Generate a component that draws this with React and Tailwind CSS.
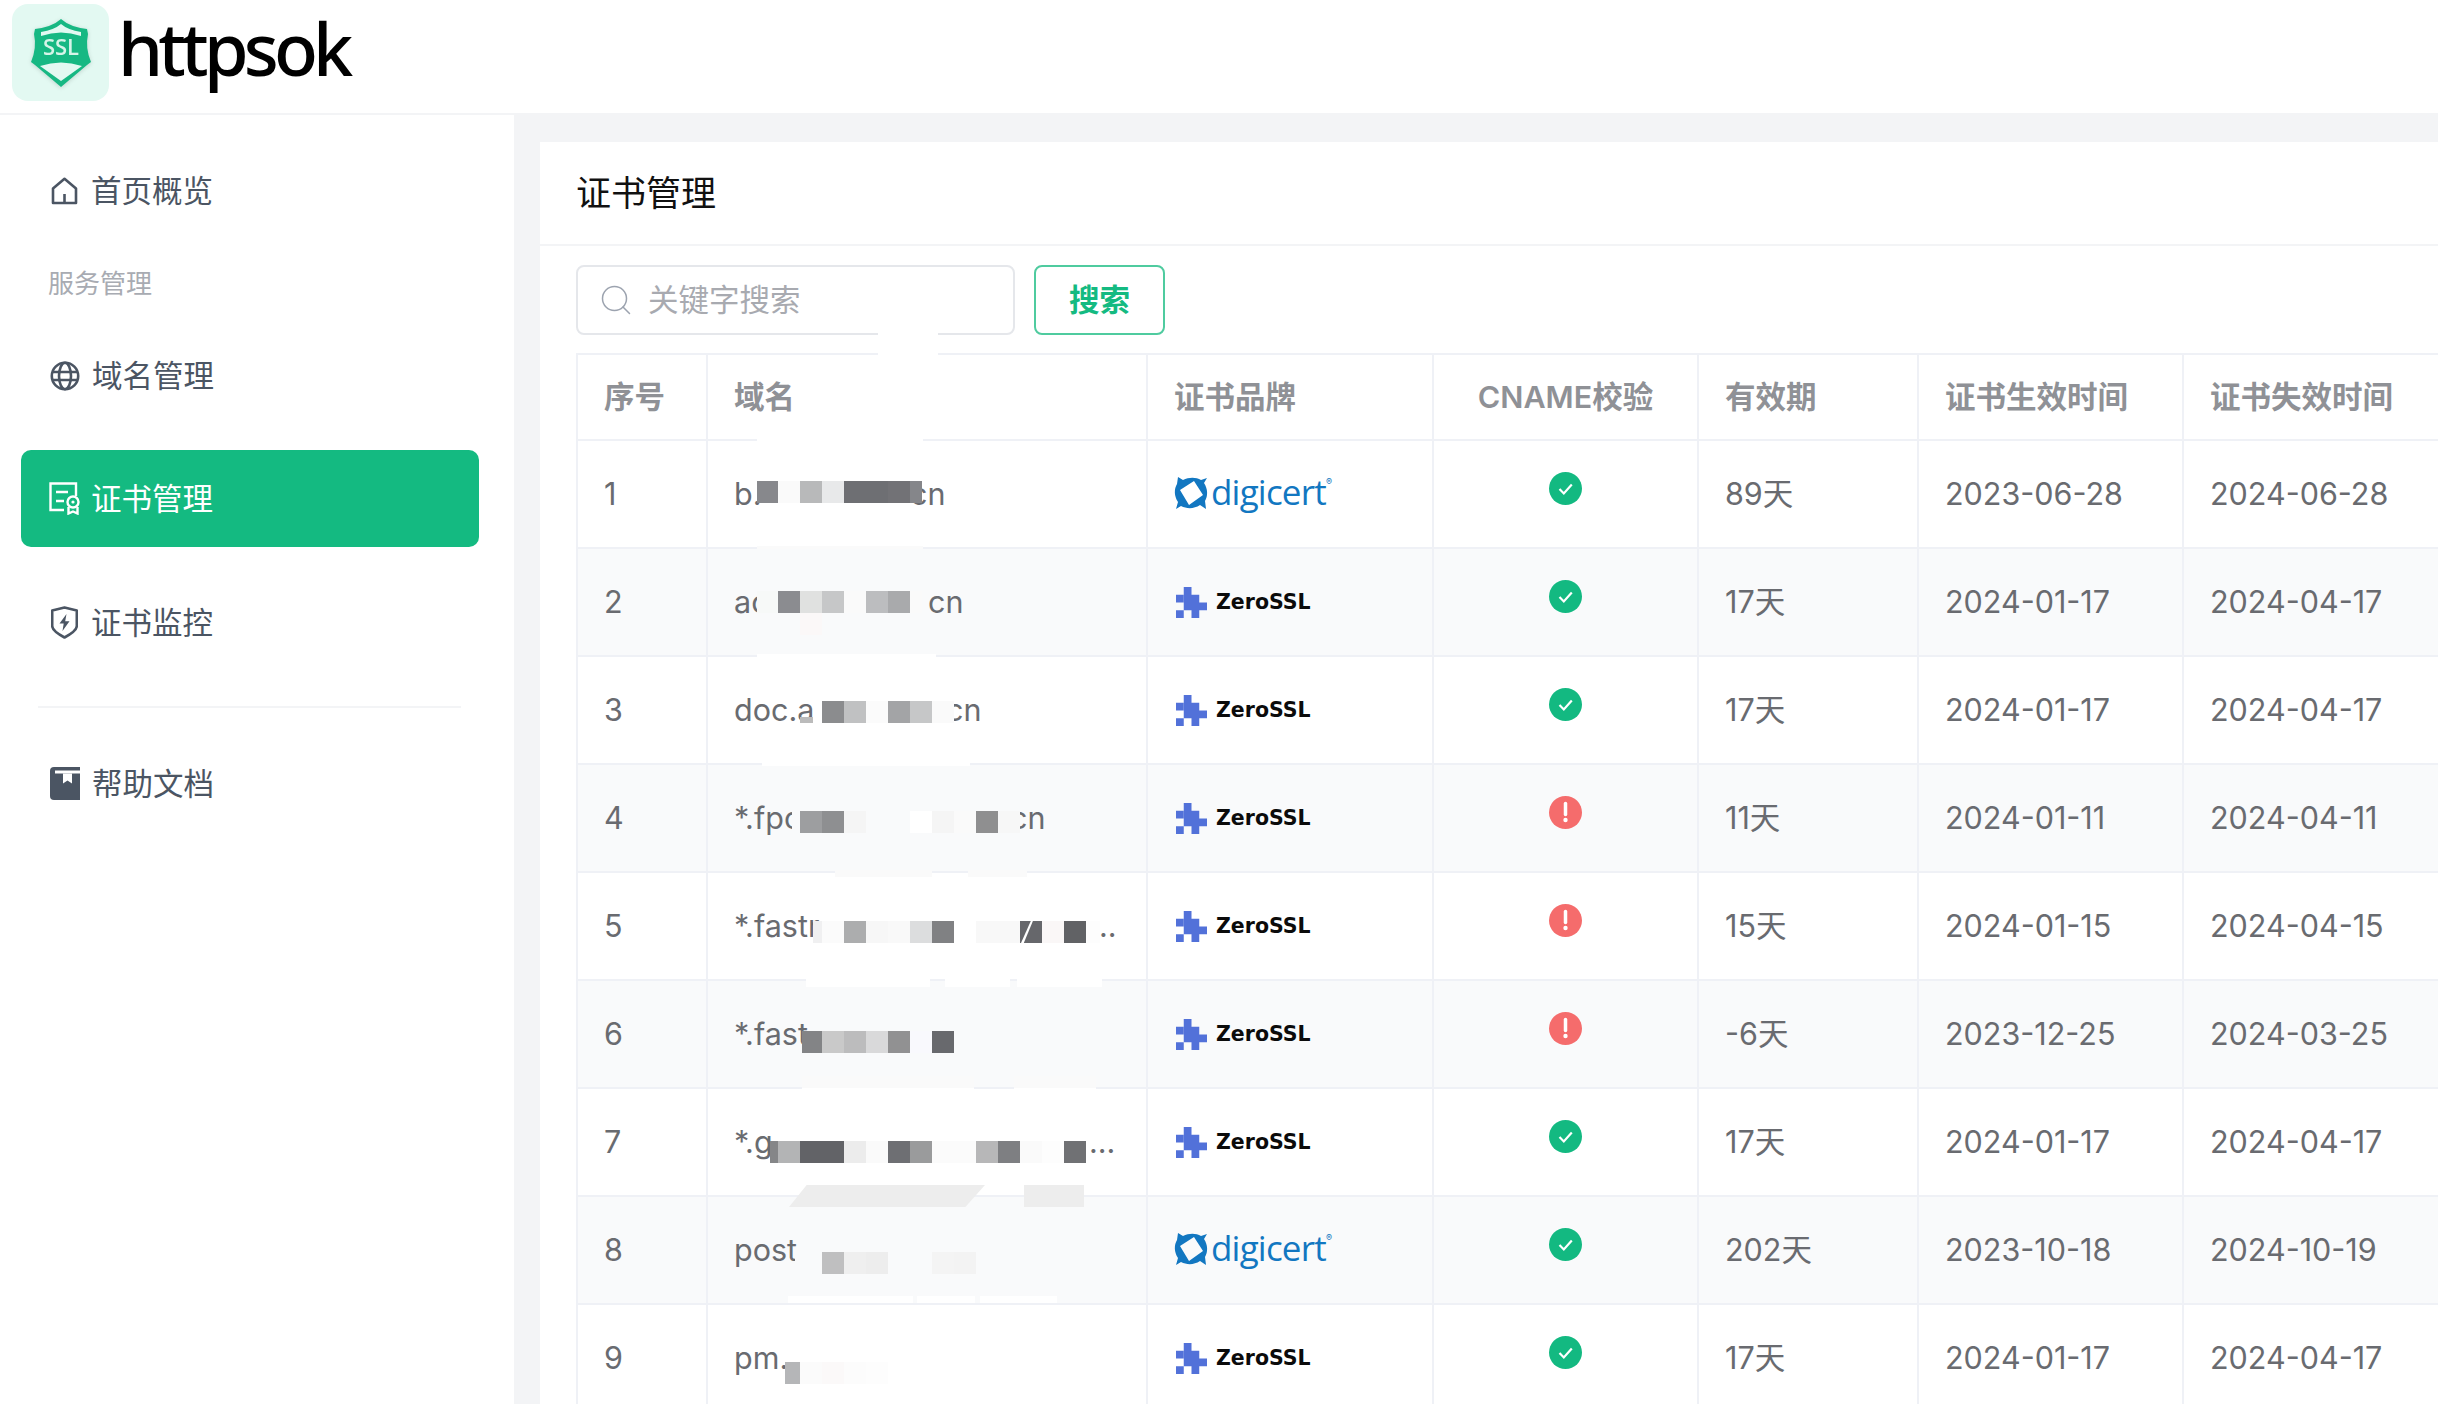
import { Search } from 'lucide-react'

const FONT = "font-['Inter','Noto_Sans_CJK_SC',sans-serif]"

function HomeIcon() {
  return (
    <svg width="27" height="28" viewBox="0 0 27 28" fill="none" stroke="#4b5563" strokeWidth="2.6" strokeLinejoin="round" className="shrink-0">
      <path d="M2 11.500 13.500 1.800 25 11.500V26H2V11.500Z" />
      <path d="M13.500 17v9" />
    </svg>
  )
}

function GlobeIcon() {
  return (
    <svg width="30" height="30" viewBox="0 0 30 30" fill="none" stroke="#4b5563" strokeWidth="2.6" className="shrink-0 -mx-px">
      <circle cx="15" cy="15" r="13.200" />
      <path d="M2 11h26M2 19h26" />
      <ellipse cx="15" cy="15" rx="6" ry="13.200" />
    </svg>
  )
}

function CertIcon() {
  return (
    <svg width="32" height="33" viewBox="0 0 32 33" fill="none" stroke="#fff" strokeWidth="2.400" className="shrink-0 -ml-0.5 -mr-[3px]">
      <path d="M15 28H1.500V1.500H27V14" />
      <path d="M7 10h12M7 19h8" />
      <circle cx="24" cy="20" r="5.500" />
      <circle cx="24" cy="20" r="1.600" fill="#fff" stroke="none" />
      <path d="M19.500 25v6.500l4.500-2 4.500 2V25" />
    </svg>
  )
}

function ShieldIcon() {
  return (
    <svg width="27" height="33" viewBox="0 0 27 33" className="shrink-0">
      <path d="M13.500 1.500 25.800 4.500V20c0 3-4 7-12.300 11.500C5.200 27 1.200 23 1.200 20V4.500L13.500 1.500Z" fill="none" stroke="#4b5563" strokeWidth="2.600" strokeLinejoin="round" />
      <path d="M15.500 8 8.500 17.500h4.200l-1.200 7.500 7-9.800h-4.300L15.500 8Z" fill="#4b5563" />
    </svg>
  )
}

function BookIcon() {
  return (
    <svg width="30" height="33" viewBox="0 0 30 33" className="shrink-0 -mx-px">
      <path d="M4 0h26v33H4a4 4 0 0 1-4-4V4a4 4 0 0 1 4-4Z" fill="#4b5563" />
      <path d="M5 3.500h25v3H5z" fill="#fff" />
      <path d="M13 6.500h9v10l-4.500-3-4.500 3Z" fill="#fff" />
    </svg>
  )
}

function SslLogo() {
  return (
    <svg width="62" height="70" viewBox="0 0 62 70" className="drop-shadow-sm">
      <path d="M31 1Q40 9 57 11L58 16Q55 30 61 44L57 47 31 69 5 47 1 44Q7 30 4 16L5 11Q22 9 31 1Z" fill="#17b883" />
      <path d="M11 14Q24 12 31 6 38 12 51 14L51 18Q31 11 11 18Z" fill="#e3f9f2" />
      <path d="M10 48Q31 41 52 48L31 63Z" fill="#e3f9f2" />
      <text x="31" y="37" textAnchor="middle" fontFamily="Open Sans" fontWeight="600" fontSize="22" fill="#d6f4e8">SSL</text>
    </svg>
  )
}

function Digicert() {
  return (
    <div className="flex items-start h-[36px] text-[#1277c1]">
      <svg width="34" height="34" viewBox="0 0 34 34" className="shrink-0">
        <path
          fillRule="evenodd"
          fill="#1277c1"
          d="M4 1 9 4C15 1 22 1 27 4L33 2 30 7C34 13 34 20 31 25L32 33 26 29C20 33 13 33 7 30L2 33 4 26C0 20 0 13 3 8L4 1ZM20 5 6 14 15 29 29 19 20 5Z"
        />
      </svg>
      <span className="ml-[3px] font-['Open_Sans',sans-serif] text-[35px] leading-[32px] tracking-[-0.8px]">digicert</span>
      <span className="text-[9px] leading-[9px] mt-[1px]">®</span>
    </div>
  )
}

function ZeroSsl() {
  return (
    <div className="flex items-center">
      <svg width="31" height="31" viewBox="0 0 4 4" fill="#5271d9" className="ml-[2px] shrink-0">
        <path d="M1 0h1v1h1v1h1v1H3v1H2V3H1V1H0V1h1V0Z" />
        <path d="M0 1h1v1H0zM0 3h1v1H0z" />
      </svg>
      <span className="ml-[9px] font-['DejaVu_Sans',sans-serif] font-bold text-[20.5px] text-[#0b0b0b]">ZeroSSL</span>
    </div>
  )
}

function OkDot() {
  return (
    <svg width="33" height="33" viewBox="0 0 33 33" className="mx-auto mb-3">
      <circle cx="16.500" cy="16.500" r="16.500" fill="#13b981" />
      <path d="M10.500 17l4.300 4.500 8-9" fill="none" stroke="#fff" strokeWidth="2.200" />
    </svg>
  )
}

function WarnDot() {
  return (
    <svg width="33" height="33" viewBox="0 0 33 33" className="mx-auto mb-3">
      <circle cx="16.500" cy="16.500" r="16.500" fill="#f56c6c" />
      <path d="M16.500 7.500v11" stroke="#fff" strokeWidth="3.500" strokeLinecap="round" />
      <circle cx="16.500" cy="24" r="2.200" fill="#fff" />
    </svg>
  )
}

// prefix + suffixes: what is left readable of each domain after the mosaic
const ROWS = [
  { no: 1, prefix: 'b.', tail: [['cn', 908]], brand: 'digicert', ok: true, days: '89天', start: '2023-06-28', end: '2024-06-28' },
  { no: 2, prefix: 'ac', tail: [['cn', 926]], brand: 'zerossl', ok: true, days: '17天', start: '2024-01-17', end: '2024-04-17' },
  { no: 3, prefix: 'doc.au', tail: [['cn', 944]], brand: 'zerossl', ok: true, days: '17天', start: '2024-01-17', end: '2024-04-17' },
  { no: 4, prefix: '*.fpc', tail: [['cn', 1008]], brand: 'zerossl', ok: false, days: '11天', start: '2024-01-11', end: '2024-04-11' },
  { no: 5, prefix: '*.fastr', tail: [['..', 1097]], brand: 'zerossl', ok: false, days: '15天', start: '2024-01-15', end: '2024-04-15' },
  { no: 6, prefix: '*.fast', tail: [], brand: 'zerossl', ok: false, days: '-6天', start: '2023-12-25', end: '2024-03-25' },
  { no: 7, prefix: '*.g', tail: [['...', 1087]], brand: 'zerossl', ok: true, days: '17天', start: '2024-01-17', end: '2024-04-17' },
  { no: 8, prefix: 'post', tail: [], brand: 'digicert', ok: true, days: '202天', start: '2023-10-18', end: '2024-10-19' },
  { no: 9, prefix: 'pm.', tail: [], brand: 'zerossl', ok: true, days: '17天', start: '2024-01-17', end: '2024-04-17' },
]

// run of mosaic squares, left to right
function run(y, x, cells, h = 22) {
  let at = x
  return cells.map(([w, c]) => {
    const p = { x: at, y, w, h, c }
    at += w
    return p
  })
}

const MOSAIC = [
  // top of the domain column
  { x: 878, y: 332, w: 60, h: 36, c: 'bg-white' },
  { x: 757, y: 437, w: 166, h: 20, c: 'bg-white' },
  ...run(481, 757, [[21, 'bg-[#87888c]'], [22, 'bg-[#fafafa]'], [22, 'bg-[#b8b9ba]'], [22, 'bg-[#e8e9ea]'], [44, 'bg-[#6e6f73]'], [22, 'bg-[#727276]'], [12, 'bg-[#85868a]']]),
  { x: 757, y: 546, w: 166, h: 3, c: 'bg-[#fafafa]' },
  ...run(591, 757, [[21, 'bg-[#f7f9f8]'], [22, 'bg-[#8b8c90]'], [22, 'bg-[#e0e1e0]'], [22, 'bg-[#c6c7c8]'], [22, 'bg-[#fafafa]'], [22, 'bg-[#bcbdbf]'], [22, 'bg-[#a9aaac]'], [12, 'bg-[#fafafa]']]),
  { x: 800, y: 613, w: 22, h: 22, c: 'bg-[#fbf8f8]' },
  { x: 757, y: 654, w: 179, h: 4, c: 'bg-white' },
  { x: 800, y: 717, w: 13, h: 6, c: 'bg-[#bbbbbb]' },
  ...run(701, 813, [[9, 'bg-white'], [22, 'bg-[#8b8c8e]'], [22, 'bg-[#c0c1c2]'], [22, 'bg-[#fbfbfb]'], [22, 'bg-[#a3a4a6]'], [22, 'bg-[#c6c7c8]'], [22, 'bg-[#fafafa]']]),
  { x: 762, y: 762, w: 208, h: 4, c: 'bg-white' },
  { x: 792, y: 805, w: 8, h: 28, c: 'bg-[#f9fafb]' },
  ...run(811, 800, [[22, 'bg-[#9d9ea0]'], [22, 'bg-[#8e8f91]'], [22, 'bg-[#f5f5f5]'], [44, 'bg-[#f9fafb]'], [22, 'bg-white'], [22, 'bg-[#f5f5f5]'], [22, 'bg-[#fafafa]'], [22, 'bg-[#8f8f90]'], [22, 'bg-[#f7f7f7]']]),
  { x: 835, y: 870, w: 97, h: 7, c: 'bg-[#fafafa]' },
  { x: 968, y: 870, w: 59, h: 7, c: 'bg-[#fafafa]' },
  ...run(921, 813, [[9, 'bg-[#f0f0f1]'], [22, 'bg-[#fbfbfb]'], [22, 'bg-[#acadae]'], [22, 'bg-[#f7f7f7]'], [22, 'bg-[#f9f9f9]'], [22, 'bg-[#dcddde]'], [22, 'bg-[#808183]'], [22, 'bg-white'], [44, 'bg-[#f8f8f8]'], [22, 'bg-[#66676b]'], [22, 'bg-[#faf7f7]'], [22, 'bg-[#616265]'], [14, 'bg-[#fdfdfd]']]),
  { x: 1021, y: 921, w: 14, h: 22, c: 'bg-white [clip-path:polygon(70%_0,85%_0,20%_100%,0_100%)]' },
  { x: 806, y: 979, w: 124, h: 8, c: 'bg-white' },
  { x: 945, y: 979, w: 65, h: 8, c: 'bg-white' },
  { x: 1017, y: 979, w: 85, h: 8, c: 'bg-white' },
  ...run(1031, 802, [[20, 'bg-[#838486]'], [22, 'bg-[#c9c9c9]'], [22, 'bg-[#bcbcbd]'], [22, 'bg-[#d9d9da]'], [22, 'bg-[#919192]'], [22, 'bg-[#f9f9fd]'], [22, 'bg-[#68696d]']]),
  { x: 802, y: 1076, w: 172, h: 12, c: 'bg-[#fafafa]' },
  { x: 1014, y: 1076, w: 82, h: 12, c: 'bg-[#fafafa]' },
  { x: 802, y: 1088, w: 172, h: 8, c: 'bg-white' },
  { x: 1014, y: 1088, w: 82, h: 8, c: 'bg-white' },
  ...run(1141, 770, [[8, 'bg-[#858688]'], [22, 'bg-[#b3b4b5]'], [44, 'bg-[#626367]'], [22, 'bg-[#ececec]'], [22, 'bg-[#fafafa]'], [22, 'bg-[#6e6f73]'], [22, 'bg-[#9a9b9c]'], [44, 'bg-[#fbfbfb]'], [22, 'bg-[#b7b7b8]'], [22, 'bg-[#7e7f82]'], [22, 'bg-[#fafafa]'], [22, 'bg-[#fdfdfd]'], [22, 'bg-[#707174]']]),
  { x: 789, y: 1185, w: 196, h: 22, c: 'bg-[#ededed] [clip-path:polygon(9%_0,100%_0,90%_100%,0_100%)]' },
  { x: 1024, y: 1185, w: 60, h: 22, c: 'bg-[#ededed]' },
  ...run(1252, 822, [[22, 'bg-[#bfbfc0]'], [22, 'bg-[#efefef]'], [22, 'bg-[#ededed]'], [44, 'bg-[#f9fafb]'], [22, 'bg-[#f4f4f4]'], [22, 'bg-[#f3f3f3]']]),
  { x: 795, y: 1252, w: 27, h: 22, c: 'bg-[#f9fafb]' },
  { x: 788, y: 1296, w: 125, h: 7, c: 'bg-white' },
  { x: 917, y: 1296, w: 58, h: 7, c: 'bg-white' },
  { x: 980, y: 1296, w: 77, h: 7, c: 'bg-white' },
  ...run(1362, 785, [[15, 'bg-[#b5b6b8]'], [22, 'bg-[#fbfbfb]'], [22, 'bg-[#fbf9f9]'], [22, 'bg-[#fcfcfc]'], [22, 'bg-[#fdfdfd]']]),
]

const HEAD_CELL = 'border-2 border-[#eff1f6] px-[26px] text-left font-semibold text-[#8f9196]'
const BODY_CELL = 'border-2 border-[#eff1f6] px-[26px] text-left'

export default function App() {
  return (
    <div className={`relative h-[1404px] w-full overflow-hidden bg-white ${FONT}`}>
      <header className="flex h-[115px] items-start border-b-2 border-[#f3f4f6] pl-3 pt-1">
        <div className="flex h-[97px] w-[97px] items-center justify-center rounded-2xl bg-[#e3f9f2]">
          <SslLogo />
        </div>
        <span className="ml-[9px] font-['Noto_Sans',sans-serif] font-medium text-[72px] leading-[88px] tracking-[-4.8px] text-black">httpsok</span>
      </header>

      <div className="flex h-[1289px]">
        <aside className="w-[514px] shrink-0 pt-[27px] text-[30.5px] text-[#4b5563]">
          <div className="ml-[21px] mr-[35px] flex h-[97px] items-center gap-[13px] px-[30px]">
            <HomeIcon />
            <span>首页概览</span>
          </div>
          <div className="ml-[48px] mt-[24px] flex h-[40px] items-center text-[26px] text-[#a8abb2]">服务管理</div>
          <div className="ml-[21px] mr-[35px] mt-[24px] flex h-[97px] items-center gap-[13px] px-[30px]">
            <GlobeIcon />
            <span>域名管理</span>
          </div>
          <div className="ml-[21px] mr-[35px] mt-[26px] flex h-[97px] items-center gap-[13px] rounded-[10px] bg-[#14ba81] px-[30px] text-white">
            <CertIcon />
            <span>证书管理</span>
          </div>
          <div className="ml-[21px] mr-[35px] mt-[27px] flex h-[97px] items-center gap-[13px] px-[30px]">
            <ShieldIcon />
            <span>证书监控</span>
          </div>
          <div className="ml-[38px] mr-[53px] mt-[35px] h-[2px] bg-[#f3f4f6]" />
          <div className="ml-[21px] mr-[35px] mt-[27px] flex h-[97px] items-center gap-[13px] px-[30px]">
            <BookIcon />
            <span>帮助文档</span>
          </div>
        </aside>

        <main className="min-w-0 flex-1 overflow-hidden bg-[#f3f4f6] pl-[26px] pt-[27px]">
          <div className="h-full w-[2000px] bg-white">
            <div className="flex h-[104px] items-center border-b-2 border-[#f3f4f6] pl-9 text-[35px] text-[#111]">证书管理</div>
            <div className="flex gap-[19px] pl-9 pt-[19px]">
              <div className="flex h-[70px] w-[439px] items-center gap-[14px] rounded-lg border-2 border-[#e5e7eb] pl-[20px]">
                <Search size={36} strokeWidth={1} color="#9ca3af" className="shrink-0" />
                <input placeholder="关键字搜索" className="w-full bg-transparent text-[30.5px] outline-none placeholder:text-[#a8aab0]" />
              </div>
              <button className="h-[70px] w-[131px] rounded-lg border-2 border-[#4fcb9f] text-[30.5px] font-semibold text-[#14ba81]">搜索</button>
            </div>
            <div className="pl-9 pt-[18px]">
              <table className="w-[1869px] table-fixed border-collapse text-[30.5px] text-[#696b70]">
                <colgroup>
                  <col className="w-[130px]" />
                  <col className="w-[440px]" />
                  <col className="w-[286px]" />
                  <col className="w-[265px]" />
                  <col className="w-[220px]" />
                  <col className="w-[265px]" />
                  <col className="w-[263px]" />
                </colgroup>
                <thead>
                  <tr className="h-[86px]">
                    <th className={HEAD_CELL}>序号</th>
                    <th className={HEAD_CELL}>域名</th>
                    <th className={HEAD_CELL}>证书品牌</th>
                    <th className={`${HEAD_CELL} !text-center`}>CNAME校验</th>
                    <th className={HEAD_CELL}>有效期</th>
                    <th className={HEAD_CELL}>证书生效时间</th>
                    <th className={HEAD_CELL}>证书失效时间</th>
                  </tr>
                </thead>
                <tbody>
                  {ROWS.map(r => (
                    <tr key={r.no} className={`h-[108px] ${r.no % 2 === 0 ? 'bg-[#f9fafb]' : 'bg-white'}`}>
                      <td className={BODY_CELL}>{r.no}</td>
                      <td className={`${BODY_CELL} relative`}>
                        {r.prefix}
                        {r.tail.map(([text, x]) => (
                          <span key={text} className="absolute top-1/2 -translate-y-1/2" style={{ left: x - 706 }}>{text}</span>
                        ))}
                      </td>
                      <td className={BODY_CELL}>{r.brand === 'digicert' ? <Digicert /> : <ZeroSsl />}</td>
                      <td className={BODY_CELL}>{r.ok ? <OkDot /> : <WarnDot />}</td>
                      <td className={BODY_CELL}>{r.days}</td>
                      <td className={BODY_CELL}>{r.start}</td>
                      <td className={BODY_CELL}>{r.end}</td>
                    </tr>
                  ))}
                </tbody>
              </table>
            </div>
          </div>
        </main>
      </div>

      {/* pixelated redaction sitting on top of the domain column */}
      <div className="pointer-events-none absolute inset-0">
        {MOSAIC.map((p, i) => (
          <div key={i} className={`absolute ${p.c}`} style={{ left: p.x, top: p.y, width: p.w, height: p.h }} />
        ))}
      </div>
    </div>
  )
}
